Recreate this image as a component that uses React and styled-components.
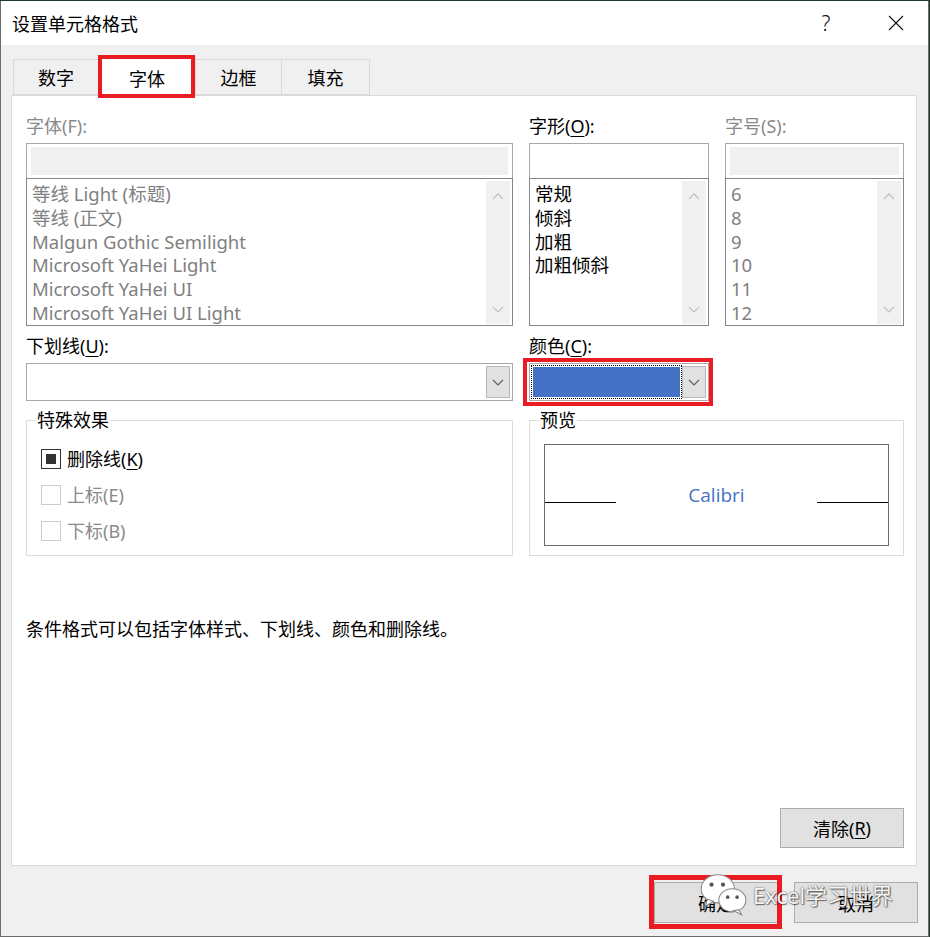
import React from 'react';
import styled, { createGlobalStyle } from 'styled-components';

const GlobalStyle = createGlobalStyle`
  html, body {
    margin: 0;
    padding: 0;
    background: #22392c;
  }
  body {
    font-family: "Noto Sans", "Noto Sans CJK SC", sans-serif;
    color: #000;
  }
  * { box-sizing: border-box; }
`;

const fontList = [
  '等线 Light (标题)',
  '等线 (正文)',
  'Malgun Gothic Semilight',
  'Microsoft YaHei Light',
  'Microsoft YaHei UI',
  'Microsoft YaHei UI Light',
];
const styleList = ['常规', '倾斜', '加粗', '加粗倾斜'];
const sizeList = ['6', '8', '9', '10', '11', '12'];

const ChevronUp = () => (
  <svg width="12" height="7" viewBox="0 0 12 7">
    <path d="M1 6 L6 1 L11 6" fill="none" stroke="#c2c2c2" strokeWidth="1.3" />
  </svg>
);

const ChevronDown = ({ color = '#c2c2c2' }) => (
  <svg width="12" height="7" viewBox="0 0 12 7">
    <path d="M1 1 L6 6 L11 1" fill="none" stroke={color} strokeWidth="1.2" />
  </svg>
);

const CloseIcon = () => (
  <svg width="16" height="16" viewBox="0 0 16 16">
    <path d="M1 1 L15 15 M15 1 L1 15" stroke="#111" strokeWidth="1.1" />
  </svg>
);

const WeChatIcon = () => (
  <svg width="50" height="44" viewBox="0 0 48 42">
    <ellipse cx="19" cy="16" rx="16" ry="13.5" fill="#fff" stroke="#8a8a8a" strokeWidth="1" />
    <path d="M9 26 L7 33 L15 28 Z" fill="#fff" stroke="#8a8a8a" strokeWidth="1" />
    <circle cx="13" cy="12" r="2" fill="#555" />
    <circle cx="24" cy="12" r="2" fill="#555" />
    <ellipse cx="33" cy="27" rx="13" ry="11" fill="#fff" stroke="#8a8a8a" strokeWidth="1" />
    <path d="M39 36 L42 41 L34 37 Z" fill="#fff" stroke="#8a8a8a" strokeWidth="1" />
    <circle cx="28.5" cy="24" r="1.7" fill="#555" />
    <circle cx="37.5" cy="24" r="1.7" fill="#555" />
  </svg>
);

const App = () => (
  <>
    <GlobalStyle />
    <Window>
      <TitleBar>
        <Title>设置单元格格式</Title>
        <TitleButtons>
          <TitleButton>?</TitleButton>
          <TitleButton>
            <CloseIcon />
          </TitleButton>
        </TitleButtons>
      </TitleBar>

      <Body>
        <TabStrip>
          <Tab $width={86}>数字</Tab>
          <Tab $width={98} $active>
            字体
            <Highlight $t={-2} $r={0} $b={-2} $l={-1} $w={4} />
          </Tab>
          <Tab $width={87}>边框</Tab>
          <Tab $width={89}>填充</Tab>
        </TabStrip>

        <Panel>
          <FieldGrid>
            <Field>
              <Label $disabled>字体(F):</Label>
              <TextBox>
                <TextFill $disabled />
              </TextBox>
              <ListBox>
                <ListItems>
                  {fontList.map((f) => (
                    <ListItem key={f} $disabled>
                      {f}
                    </ListItem>
                  ))}
                </ListItems>
                <ScrollBar>
                  <ScrollArrow>
                    <ChevronUp />
                  </ScrollArrow>
                  <ScrollArrow>
                    <ChevronDown />
                  </ScrollArrow>
                </ScrollBar>
              </ListBox>
            </Field>

            <Field>
              <Label>
                字形(<u>O</u>):
              </Label>
              <TextBox>
                <TextFill />
              </TextBox>
              <ListBox>
                <ListItems>
                  {styleList.map((s) => (
                    <ListItem key={s}>{s}</ListItem>
                  ))}
                </ListItems>
                <ScrollBar>
                  <ScrollArrow>
                    <ChevronUp />
                  </ScrollArrow>
                  <ScrollArrow>
                    <ChevronDown />
                  </ScrollArrow>
                </ScrollBar>
              </ListBox>
            </Field>

            <Field>
              <Label $disabled>字号(S):</Label>
              <TextBox>
                <TextFill $disabled />
              </TextBox>
              <ListBox>
                <ListItems>
                  {sizeList.map((s) => (
                    <ListItem key={s} $disabled>
                      {s}
                    </ListItem>
                  ))}
                </ListItems>
                <ScrollBar>
                  <ScrollArrow>
                    <ChevronUp />
                  </ScrollArrow>
                  <ScrollArrow>
                    <ChevronDown />
                  </ScrollArrow>
                </ScrollBar>
              </ListBox>
            </Field>
          </FieldGrid>

          <FieldGrid $gap={8}>
            <Field>
              <Label>
                下划线(<u>U</u>):
              </Label>
              <Select>
                <SelectValue />
                <DropButton>
                  <ChevronDown color="#606060" />
                </DropButton>
              </Select>
            </Field>
            <Field>
              <Label>
                颜色(<u>C</u>):
              </Label>
              <Select>
                <ColorValue />
                <DropButton>
                  <ChevronDown color="#606060" />
                </DropButton>
                <Highlight $t={-6} $r={-5} $b={-6} $l={-7} $w={4} />
              </Select>
            </Field>
          </FieldGrid>

          <FieldGrid $gap={7}>
            <Group>
              <Legend>特殊效果</Legend>
              <CheckRow>
                <CheckBox $checked>
                  <CheckMark />
                </CheckBox>
                <CheckLabel>
                  删除线(<u>K</u>)
                </CheckLabel>
              </CheckRow>
              <CheckRow>
                <CheckBox />
                <CheckLabel $disabled>上标(E)</CheckLabel>
              </CheckRow>
              <CheckRow>
                <CheckBox />
                <CheckLabel $disabled>下标(B)</CheckLabel>
              </CheckRow>
            </Group>
            <PreviewGroup>
              <Legend>预览</Legend>
              <PreviewBox>
                <PreviewLine />
                <PreviewText>Calibri</PreviewText>
                <PreviewLine />
              </PreviewBox>
            </PreviewGroup>
          </FieldGrid>

          <Description>条件格式可以包括字体样式、下划线、颜色和删除线。</Description>

          <ClearRow>
            <Button>
              清除(<u>R</u>)
            </Button>
          </ClearRow>
        </Panel>
      </Body>

      <Footer>
        <Button $height={41}>
          确定
          <Highlight $t={-8} $r={-5} $b={-7} $l={-6} $w={5} />
        </Button>
        <Button $height={41}>取消</Button>
        <Watermark>
          <WeChatIcon />
          <WatermarkText>Excel学习世界</WatermarkText>
        </Watermark>
      </Footer>
    </Window>
  </>
);

const Window = styled.div`
  position: relative;
  width: 929px;
  height: 936px;
  margin-top: 1px;
  display: flex;
  flex-direction: column;
  background: #f0f0f0;
  border-left: 1px solid #6b6b6b;
  border-right: 1px solid #6b6b6b;
  border-bottom: 1px solid #6b6b6b;
`;

const TitleBar = styled.div`
  height: 44px;
  flex-shrink: 0;
  display: flex;
  align-items: center;
  padding-left: 11px;
  background: #fff;
`;

const Title = styled.div`
  font-family: "Noto Sans CJK SC", sans-serif;
  font-size: 18px;
  line-height: 24px;
`;

const TitleButtons = styled.div`
  margin-left: auto;
  display: flex;
  gap: 6px;
`;

const TitleButton = styled.div`
  width: 64px;
  height: 44px;
  display: flex;
  align-items: center;
  justify-content: center;
  font-size: 21px;
  font-weight: 300;
  color: #111;
`;

const Body = styled.div`
  display: flex;
  flex-direction: column;
  padding: 14px 11px 0 10px;
`;

const TabStrip = styled.div`
  display: flex;
  align-items: flex-end;
  height: 36px;
  padding-left: 2px;
`;

const Tab = styled.div`
  position: relative;
  width: ${(p) => p.$width}px;
  height: ${(p) => (p.$active ? 40 : 36)}px;
  margin-bottom: ${(p) => (p.$active ? -1 : 0)}px;
  z-index: ${(p) => (p.$active ? 1 : 0)};
  display: flex;
  align-items: center;
  justify-content: center;
  padding-top: ${(p) => (p.$active ? 2 : 0)}px;
  font-family: "Noto Sans CJK SC", sans-serif;
  font-size: 18px;
  background: ${(p) => (p.$active ? '#fff' : '#f0f0f0')};
  border: 1px solid #d9d9d9;
  border-bottom: ${(p) => (p.$active ? 'none' : '1px solid #d9d9d9')};
  & + & {
    margin-left: -1px;
  }
`;

const Highlight = styled.span`
  position: absolute;
  top: ${(p) => p.$t}px;
  right: ${(p) => p.$r}px;
  bottom: ${(p) => p.$b}px;
  left: ${(p) => p.$l}px;
  border: ${(p) => p.$w}px solid #e91c24;
  pointer-events: none;
  z-index: 3;
`;

const Panel = styled.div`
  height: 771px;
  display: flex;
  flex-direction: column;
  padding: 18px 12px 17px 14px;
  background: #fff;
  border: 1px solid #d9d9d9;
`;

const FieldGrid = styled.div`
  display: grid;
  grid-template-columns: 487px 180px 179px;
  column-gap: 16px;
  margin-top: ${(p) => p.$gap || 0}px;
`;

const Field = styled.div`
  display: flex;
  flex-direction: column;
  min-width: 0;
`;

const Label = styled.div`
  height: 24px;
  line-height: 24px;
  margin-bottom: 5px;
  font-size: 18px;
  color: ${(p) => (p.$disabled ? '#8a8a8a' : '#000')};
  u {
    text-underline-offset: 3px;
  }
`;

const TextBox = styled.div`
  height: 36px;
  display: flex;
  padding: 3px 4px;
  background: #fff;
  border: 1px solid #a9a9a9;
`;

const TextFill = styled.div`
  flex: 1;
  background: ${(p) => (p.$disabled ? '#f0f0f0' : '#fff')};
`;

const ListBox = styled.div`
  height: 148px;
  margin-top: -1px;
  display: flex;
  background: #fff;
  border: 1px solid #858585;
`;

const ListItems = styled.div`
  flex: 1;
  min-width: 0;
  padding: 3px 0 0 5px;
`;

const ListItem = styled.div`
  height: 23.8px;
  line-height: 23.8px;
  font-size: 18.5px;
  white-space: nowrap;
  color: ${(p) => (p.$disabled ? '#808080' : '#000')};
`;

const ScrollBar = styled.div`
  width: 24px;
  margin: 2px 2px 1px 0;
  display: flex;
  flex-direction: column;
  justify-content: space-between;
  background: #f0f0f0;
`;

const ScrollArrow = styled.div`
  height: 30px;
  display: flex;
  align-items: center;
  justify-content: center;
`;

const Select = styled.div`
  position: relative;
  height: 38px;
  display: flex;
  padding: 2px;
  background: #fff;
  border: 1px solid #a9a9a9;
`;

const SelectValue = styled.div`
  flex: 1;
`;

const ColorValue = styled.div`
  flex: 1;
  margin: 1px 2px 1px 1px;
  background: #4472c4;
  outline: 1px dotted #000;
  outline-offset: 1px;
`;

const DropButton = styled.div`
  width: 24px;
  display: flex;
  align-items: center;
  justify-content: center;
  background: #e1e1e1;
  border: 1px solid #b8b8b8;
`;

const Group = styled.fieldset`
  margin: 0;
  min-width: 0;
  padding: 9px 0 6px 14px;
  border: 1px solid #dcdcdc;
`;

const PreviewGroup = styled(Group)`
  grid-column: span 2;
  padding: 12px 14px 9px 14px;
`;

const Legend = styled.legend`
  margin-left: -5px;
  padding: 0 1px;
  height: 24px;
  line-height: 24px;
  font-size: 18px;
`;

const CheckRow = styled.div`
  height: 36px;
  display: flex;
  align-items: center;
  gap: 6px;
`;

const CheckBox = styled.div`
  width: 20px;
  height: 20px;
  display: flex;
  align-items: center;
  justify-content: center;
  background: #fff;
  border: 1px solid ${(p) => (p.$checked ? '#333' : '#cccccc')};
`;

const CheckMark = styled.div`
  width: 10px;
  height: 10px;
  background: #333;
`;

const CheckLabel = styled.div`
  font-size: 18px;
  line-height: 24px;
  color: ${(p) => (p.$disabled ? '#8a8a8a' : '#000')};
  u {
    text-underline-offset: 3px;
  }
`;

const PreviewBox = styled.div`
  height: 102px;
  display: flex;
  align-items: center;
  border: 1px solid #6b6b6b;
`;

const PreviewLine = styled.div`
  width: 71px;
  height: 1px;
  margin-top: 14px;
  background: #000;
`;

const PreviewText = styled.div`
  flex: 1;
  text-align: center;
  font-family: "Open Sans", sans-serif;
  font-size: 19px;
  color: #4472c4;
`;

const Description = styled.div`
  margin-top: 61px;
  font-size: 18px;
  line-height: 24px;
`;

const ClearRow = styled.div`
  margin-top: auto;
  display: flex;
  justify-content: flex-end;
`;

const Button = styled.div`
  position: relative;
  width: 124px;
  height: ${(p) => p.$height || 40}px;
  display: flex;
  align-items: center;
  justify-content: center;
  font-size: 18px;
  background: #e1e1e1;
  border: 1px solid #adadad;
  u {
    text-underline-offset: 3px;
  }
`;

const Footer = styled.div`
  position: relative;
  flex: 1;
  display: flex;
  justify-content: flex-end;
  align-items: flex-start;
  gap: 16px;
  padding: 16px 10px 0 0;
`;

const Watermark = styled.div`
  position: absolute;
  left: 697px;
  top: 6px;
  display: flex;
  align-items: center;
  gap: 5px;
  z-index: 4;
  pointer-events: none;
`;

const WatermarkText = styled.div`
  font-family: "Noto Sans", "Noto Sans CJK SC", sans-serif;
  font-size: 22px;
  color: rgba(255, 255, 255, 0.95);
  text-shadow: 0 0 2px rgba(0, 0, 0, 0.7), 1px 1px 1px rgba(0, 0, 0, 0.45);
`;

export default App;
